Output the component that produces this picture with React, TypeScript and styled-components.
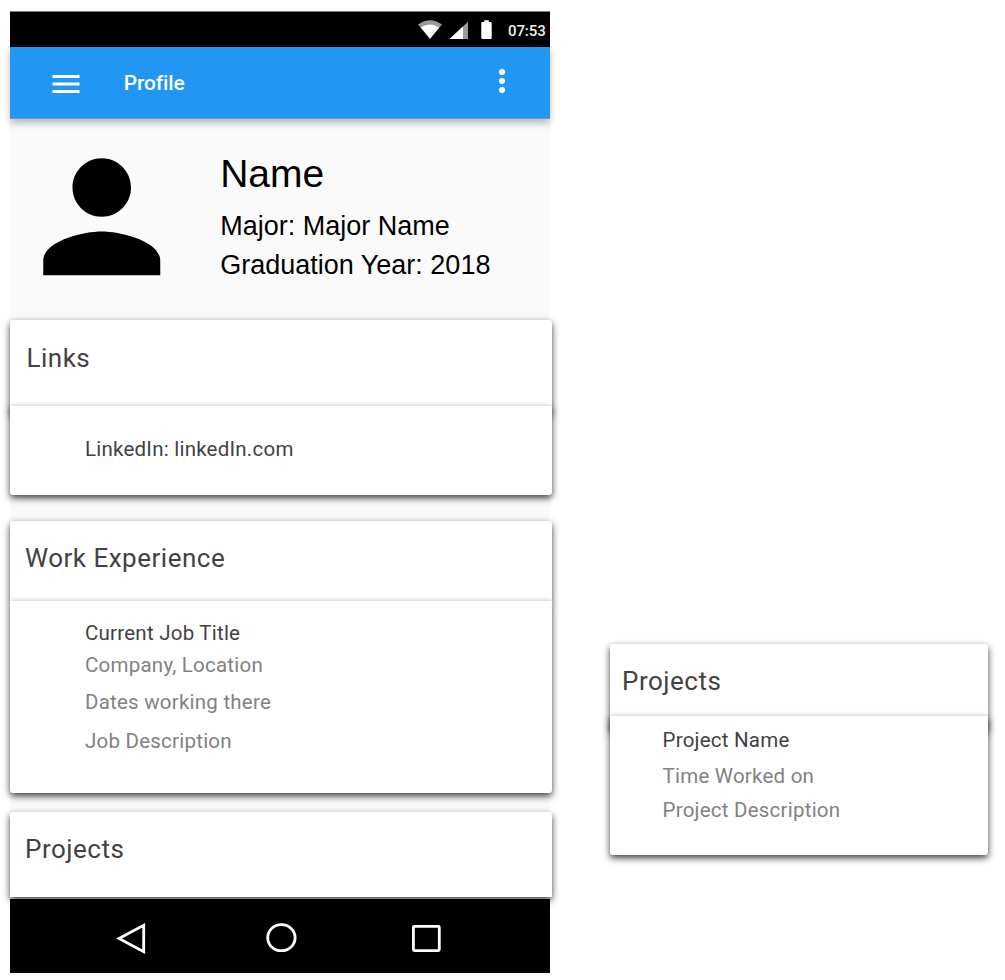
import React from 'react';
import styled, { createGlobalStyle } from 'styled-components';

const GlobalStyle = createGlobalStyle`
  * { box-sizing: border-box; }
  body { margin: 0; background: #fff; }
  svg { display: block; }
`;

const Board = styled.main`
  display: flex;
  align-items: flex-start;
  width: 1005px;
  height: 980px;
  padding: 11px 0 0 10px;
  overflow: hidden;
  font-family: Roboto, sans-serif;
`;

const Phone = styled.section`
  display: flex;
  flex-direction: column;
  width: 540px;
  height: 962px;
  background: #fafafa;
`;

const StatusBar = styled.header`
  display: flex;
  align-items: flex-start;
  justify-content: flex-end;
  flex: none;
  height: 36px;
  border-top: 1px solid #808080;
  background: #000;
`;

const Clock = styled.time`
  width: 42px;
  margin-left: 16px;
  font-size: 15px;
  font-weight: 500;
  line-height: 18px;
  letter-spacing: -0.1px;
  padding-top: 10px;
  color: #f0f0f0;
`;

const AppBar = styled.nav`
  display: flex;
  align-items: flex-start;
  flex: none;
  height: 72px;
  padding-left: 37.5px;
  border-bottom: 1px solid #5f9fe0;
  background: #2196f3;
  box-shadow: 0 4px 7px rgba(0, 0, 0, 0.27);
`;

const MenuIcon = styled.svg`
  margin-top: 19px;
`;

const MoreIcon = styled.svg`
  margin: 16.3px 30px 0 auto;
`;

const ScreenTitle = styled.h1`
  margin: 24px 0 0 40.3px;
  font-size: 21px;
  font-weight: 500;
  line-height: 24px;
  letter-spacing: -0.15px;
  color: #fff;
`;

const Hero = styled.section`
  display: flex;
  align-items: flex-start;
  flex: none;
  height: 201px;
  padding: 10px 0 0 3.5px;
  font-family: 'Liberation Sans', Arial, sans-serif;
  color: #000;
`;

const HeroText = styled.div`
  padding: 23px 0 0 31.2px;
`;

const PersonName = styled.h2`
  margin: 0 0 11px;
  font-size: 39px;
  font-weight: 400;
  line-height: 44px;
`;

const Fact = styled.p`
  margin: 0;
  font-size: 27px;
  line-height: 39px;
`;

const paperShadow = '0 3px 7px rgba(0, 0, 0, 0.76)';

const Card = styled.article<{ $width: number; $gap?: number }>`
  flex: none;
  width: ${(p) => p.$width}px;
  margin-bottom: ${(p) => p.$gap ?? 0}px;
`;

const CardHead = styled.header<{ $height: number; $inset: number; $top: number; $square?: boolean }>`
  height: ${(p) => p.$height}px;
  padding: ${(p) => p.$top}px 0 0 ${(p) => p.$inset}px;
  border-radius: ${(p) => (p.$square ? '3px 3px 0 0' : '3px')};
  background: #fff;
  box-shadow: ${paperShadow};
`;

const CardTitle = styled.h3`
  margin: 0;
  font-size: 26px;
  font-weight: 400;
  line-height: 32px;
  letter-spacing: 0.5px;
  color: #424242;
`;

const CardBody = styled.div<{ $height: number; $overlap?: number; $inset: number; $top: number }>`
  position: relative;
  height: ${(p) => p.$height}px;
  margin-top: ${(p) => -(p.$overlap ?? 0)}px;
  padding: ${(p) => p.$top}px 0 0 ${(p) => p.$inset}px;
  border-radius: 0 0 3px 3px;
  background: #fff;
  box-shadow: ${paperShadow};
`;

const Line = styled.p<{ $muted?: boolean; $height: number }>`
  margin: 0;
  height: ${(p) => p.$height}px;
  font-size: 20.5px;
  line-height: 24px;
  letter-spacing: 0.23px;
  color: ${(p) => (p.$muted ? '#828282' : '#424242')};
`;

const SystemNav = styled.footer`
  flex: none;
  height: 74px;
  margin-top: auto;
  background: #000;
`;

const SideColumn = styled.aside`
  padding: 633px 0 0 60px;
`;

const StatusIcons = () => (
  <svg width="76" height="22" viewBox="416 18 76 22">
    <path d="M418 24.5Q430 16 442 24.5L430 38.8Z" fill="#999" />
    <path d="M420.8 27.5Q430 21.5 439.2 27.5L430 38.8Z" fill="#fff" />
    <path d="M468 21.8V39H449.5Z" fill="#999" />
    <path d="M463 26.5V39H449.5Z" fill="#fff" />
    <path d="M484.2 20.2h4.6v1.8h1.9q1 0 1 1v15q0 1-1 1h-8.4q-1 0-1-1V23q0-1 1-1h1.9Z" fill="#fff" />
  </svg>
);

const IconSlot = styled.div`
  padding-top: 6px;
`;

export default function App() {
  return (
    <>
      <GlobalStyle />
      <Board>
        <Phone>
          <StatusBar>
            <IconSlot>
              <StatusIcons />
            </IconSlot>
            <Clock>07:53</Clock>
          </StatusBar>
          <AppBar>
            <MenuIcon width="36" height="36" viewBox="0 0 24 24" fill="#fff">
              <path d="M3 18h18v-2H3v2zm0-5h18v-2H3v2zm0-7v2h18V6H3z" />
            </MenuIcon>
            <ScreenTitle>Profile</ScreenTitle>
            <MoreIcon width="36" height="36" viewBox="0 0 24 24" fill="#fff">
              <circle cx="12" cy="6" r="2" />
              <circle cx="12" cy="12" r="2" />
              <circle cx="12" cy="18" r="2" />
            </MoreIcon>
          </AppBar>
          <Hero>
            <svg width="175.5" height="175.5" viewBox="0 0 24 24">
              <path d="M12 12c2.21 0 4-1.79 4-4s-1.79-4-4-4-4 1.79-4 4 1.79 4 4 4zm0 2c-2.67 0-8 1.34-8 4v2h16v-2c0-2.66-5.33-4-8-4z" />
            </svg>
            <HeroText>
              <PersonName>Name</PersonName>
              <Fact>Major: Major Name</Fact>
              <Fact>Graduation Year: 2018</Fact>
            </HeroText>
          </Hero>
          <Card $width={542} $gap={26}>
            <CardHead $height={93} $inset={16.5} $top={22}>
              <CardTitle>Links</CardTitle>
            </CardHead>
            <CardBody $height={89} $overlap={7} $inset={75} $top={31}>
              <Line $height={24}>LinkedIn: linkedIn.com</Line>
            </CardBody>
          </Card>
          <Card $width={542} $gap={19}>
            <CardHead $height={80} $inset={15} $top={21} $square>
              <CardTitle>Work Experience</CardTitle>
            </CardHead>
            <CardBody $height={192} $inset={75} $top={20}>
              <Line $height={32}>Current Job Title</Line>
              <Line $height={37} $muted>Company, Location</Line>
              <Line $height={39} $muted>Dates working there</Line>
              <Line $height={24} $muted>Job Description</Line>
            </CardBody>
          </Card>
          <Card $width={542}>
            <CardHead $height={85} $inset={15} $top={21} $square>
              <CardTitle>Projects</CardTitle>
            </CardHead>
          </Card>
          <SystemNav>
            <svg width="540" height="74" viewBox="10 899 540 74" fill="none" stroke="#fff" strokeWidth="2.8">
              <path d="M143.7 925.3V951.7L119 938.5Z" />
              <ellipse cx="281.4" cy="937.7" rx="13.7" ry="13" />
              <rect x="413.4" y="926.4" width="25.9" height="24.2" rx="1" />
            </svg>
          </SystemNav>
        </Phone>
        <SideColumn>
          <Card $width={378}>
            <CardHead $height={87} $inset={12} $top={21}>
              <CardTitle>Projects</CardTitle>
            </CardHead>
            <CardBody $height={139} $overlap={15} $inset={52.5} $top={12}>
              <Line $height={36}>Project Name</Line>
              <Line $height={34} $muted>Time Worked on</Line>
              <Line $height={24} $muted>Project Description</Line>
            </CardBody>
          </Card>
        </SideColumn>
      </Board>
    </>
  );
}
